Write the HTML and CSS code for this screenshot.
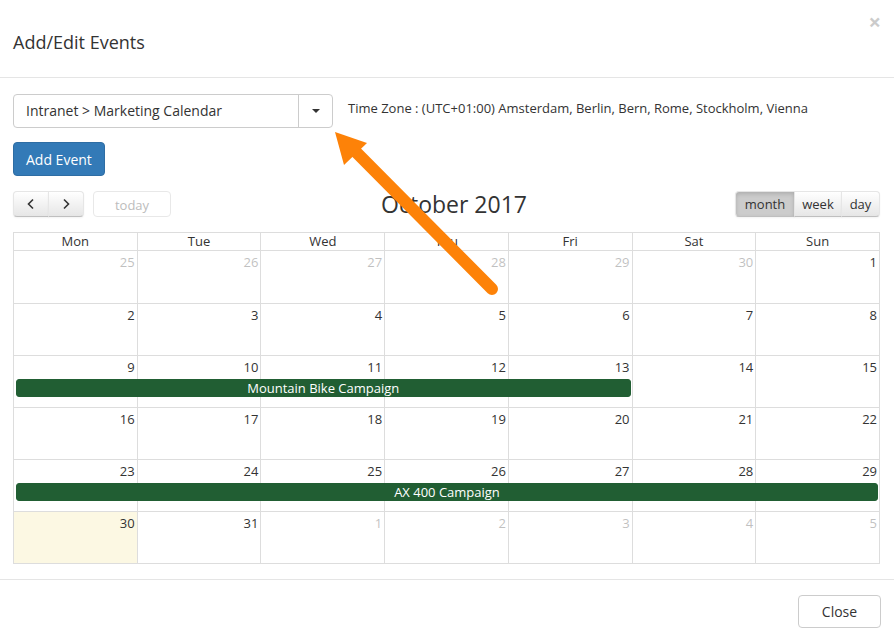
FILE: index.html
```html
<!DOCTYPE html>
<html>
<head>
<meta charset="utf-8">
<link rel="stylesheet" href="styles.css">
</head>
<body>
<div class="modal">
  <div class="modal-header">
    <h4 class="modal-title">Add/Edit Events</h4>
    <span class="close">&times;</span>
  </div>
  <div class="modal-body">
    <div class="picker-row">
      <div class="select">
        <span class="select-text">Intranet &gt; Marketing Calendar</span>
        <span class="select-btn"><span class="caret"></span></span>
      </div>
      <span class="tz">Time Zone : (UTC+01:00) Amsterdam, Berlin, Bern, Rome, Stockholm, Vienna</span>
    </div>
    <button class="btn-primary">Add Event</button>

    <div class="toolbar">
      <div class="tb-left">
        <div class="btn-group">
          <button class="fc-btn nav">
            <svg width="10" height="12" viewBox="0 0 10 12"><path d="M7 1.5 L2.5 6 L7 10.5" fill="none" stroke="#333" stroke-width="1.6"/></svg>
          </button>
          <button class="fc-btn nav">
            <svg width="10" height="12" viewBox="0 0 10 12"><path d="M3 1.5 L7.5 6 L3 10.5" fill="none" stroke="#333" stroke-width="1.6"/></svg>
          </button>
        </div>
        <button class="fc-btn today" disabled>today</button>
      </div>
      <h2 class="fc-title">October 2017</h2>
      <div class="btn-group">
        <button class="fc-btn view v-month active">month</button>
        <button class="fc-btn view v-week">week</button>
        <button class="fc-btn view v-day">day</button>
      </div>
    </div>

    <div class="cal">
      <div class="cal-head">
        <div class="hcell">Mon</div><div class="hcell">Tue</div><div class="hcell">Wed</div><div class="hcell">Thu</div><div class="hcell">Fri</div><div class="hcell">Sat</div><div class="hcell">Sun</div>
      </div>
      <div class="week first">
        <div class="day other"><span>25</span></div><div class="day other"><span>26</span></div><div class="day other"><span>27</span></div><div class="day other"><span>28</span></div><div class="day other"><span>29</span></div><div class="day other"><span>30</span></div><div class="day"><span>1</span></div>
      </div>
      <div class="week">
        <div class="day"><span>2</span></div><div class="day"><span>3</span></div><div class="day"><span>4</span></div><div class="day"><span>5</span></div><div class="day"><span>6</span></div><div class="day"><span>7</span></div><div class="day"><span>8</span></div>
      </div>
      <div class="week">
        <div class="day"><span>9</span></div><div class="day"><span>10</span></div><div class="day"><span>11</span></div><div class="day"><span>12</span></div><div class="day"><span>13</span></div><div class="day"><span>14</span></div><div class="day"><span>15</span></div>
        <div class="event span5">Mountain Bike Campaign</div>
      </div>
      <div class="week">
        <div class="day"><span>16</span></div><div class="day"><span>17</span></div><div class="day"><span>18</span></div><div class="day"><span>19</span></div><div class="day"><span>20</span></div><div class="day"><span>21</span></div><div class="day"><span>22</span></div>
      </div>
      <div class="week">
        <div class="day"><span>23</span></div><div class="day"><span>24</span></div><div class="day"><span>25</span></div><div class="day"><span>26</span></div><div class="day"><span>27</span></div><div class="day"><span>28</span></div><div class="day"><span>29</span></div>
        <div class="event span7">AX 400 Campaign</div>
      </div>
      <div class="week">
        <div class="day today-cell"><span>30</span></div><div class="day"><span>31</span></div><div class="day other"><span>1</span></div><div class="day other"><span>2</span></div><div class="day other"><span>3</span></div><div class="day other"><span>4</span></div><div class="day other"><span>5</span></div>
      </div>
    </div>
  </div>
  <div class="modal-footer">
    <button class="btn-default">Close</button>
  </div>

  <svg class="arrow" width="894" height="640" viewBox="0 0 894 640">
    <line x1="492" y1="289" x2="352" y2="148" stroke="#fd8208" stroke-width="12" stroke-linecap="round"/>
    <polygon points="335,132 367,143 344,165" fill="#fd8208"/>
  </svg>
</div>
</body>
</html>
```

FILE: styles.css
```css
* { box-sizing: border-box; }
html, body { margin: 0; padding: 0; }
body {
  font-family: "Open Sans", "Liberation Sans", sans-serif;
  color: #333;
  background: #fff;
  width: 894px;
  height: 640px;
  overflow: hidden;
}
.modal { position: relative; width: 894px; height: 640px; }

.modal-header {
  position: relative;
  padding: 29px 13px 22px;
  border-bottom: 1px solid #e5e5e5;
}
.modal-title {
  margin: 0;
  font-size: 18px;
  font-weight: 400;
  line-height: 26px;
  color: #333;
}
.close {
  position: absolute;
  top: 6px;
  right: 13px;
  font-size: 22px;
  font-weight: 700;
  color: #000;
  opacity: 0.2;
  line-height: 30px;
}

.modal-body { padding: 16px 14px 15px 13px; }

.picker-row { display: flex; align-items: center; }
.select {
  display: flex;
  width: 320px;
  height: 34px;
  border: 1px solid #ccc;
  border-radius: 4px;
  background: #fff;
}
.select-text {
  flex: 1;
  padding: 0 12px;
  font-size: 14px;
  line-height: 32px;
  color: #333;
}
.select-btn {
  width: 34px;
  border-left: 1px solid #ccc;
  display: flex;
  align-items: center;
  justify-content: center;
}
.caret {
  width: 0; height: 0;
  border-left: 4px solid transparent;
  border-right: 4px solid transparent;
  border-top: 4px solid #333;
}
.tz { margin-left: 15px; font-size: 13px; color: #333; margin-top: -6px; }

.btn-primary {
  display: block;
  margin-top: 14px;
  height: 34px;
  padding: 0 12px;
  font-family: inherit;
  font-size: 14px;
  color: #fff;
  background: #337ab7;
  border: 1px solid #2e6da4;
  border-radius: 4px;
}

.toolbar {
  display: flex;
  justify-content: space-between;
  align-items: center;
  margin-top: 15px;
  height: 26px;
}
.tb-left { display: flex; align-items: center; }
.btn-group { display: flex; }
.fc-btn {
  height: 26px;
  font-family: inherit;
  font-size: 13px;
  color: #333;
  padding: 0;
  background-color: #f5f5f5;
  background-image: linear-gradient(to bottom, #fff, #e6e6e6);
  border: 1px solid;
  border-color: #e6e6e6 #e6e6e6 #bfbfbf;
  box-shadow: inset 0 1px 0 rgba(255,255,255,.2), 0 1px 2px rgba(0,0,0,.05);
  margin: 0;
  display: flex;
  align-items: center;
  justify-content: center;
}
.btn-group .fc-btn + .fc-btn { margin-left: -1px; }
.btn-group .fc-btn:first-child { border-radius: 4px 0 0 4px; }
.btn-group .fc-btn:last-child { border-radius: 0 4px 4px 0; }
.fc-btn.nav { width: 36px; }
.fc-btn.today {
  margin-left: 9px;
  width: 78px;
  border-radius: 4px;
  opacity: .65;
  box-shadow: none;
  background-image: none;
  background-color: #fff;
  border-color: #ddd;
  color: #999;
  padding-top: 2px;
}
.v-month { width: 60px; }
.v-week { width: 48px; }
.v-day { width: 39px; }
.fc-btn.active {
  background-image: none;
  background-color: #ccc;
  box-shadow: inset 0 2px 4px rgba(0,0,0,.15), 0 1px 2px rgba(0,0,0,.05);
}
.fc-title {
  margin: 0;
  font-size: 23px;
  font-weight: 400;
  line-height: 26px;
  color: #333;
  position: relative;
  left: 1px;
}

.cal {
  margin-top: 15px;
  border-top: 1px solid #ddd;
  border-left: 1px solid #ddd;
}
.cal-head, .week {
  display: grid;
  grid-template-columns: repeat(7, 1fr);
}
.hcell {
  text-align: center;
  font-size: 13px;
  line-height: 17px;
  border-right: 1px solid #ddd;
  border-bottom: 1px solid #ddd;
}
.day {
  grid-row: 1;
  height: 52px;
  border-right: 1px solid #ddd;
  border-bottom: 1px solid #ddd;
  text-align: right;
  padding: 2px 2px 0 0;
  font-size: 13px;
  line-height: 18px;
}
.day:nth-child(1) { grid-column: 1; }
.day:nth-child(2) { grid-column: 2; }
.day:nth-child(3) { grid-column: 3; }
.day:nth-child(4) { grid-column: 4; }
.day:nth-child(5) { grid-column: 5; }
.day:nth-child(6) { grid-column: 6; }
.day:nth-child(7) { grid-column: 7; }
.week.first .day { height: 53px; }
.day.other span { opacity: .3; }
.today-cell { background: #fcf8e3; }
.event {
  grid-row: 1;
  align-self: start;
  margin: 23px 2px 0 2px;
  height: 18px;
  background: #215e33;
  border: 1px solid #215e33;
  border-radius: 3px;
  color: #fff;
  font-size: 13px;
  line-height: 16px;
  text-align: center;
}
.span5 { grid-column: 1 / 6; }
.span7 { grid-column: 1 / 8; }

.modal-footer {
  border-top: 1px solid #e5e5e5;
  padding: 15px 13px;
  display: flex;
  justify-content: flex-end;
}
.btn-default {
  height: 33px;
  width: 83px;
  padding: 0;
  font-family: inherit;
  font-size: 14px;
  color: #333;
  background: #fff;
  border: 1px solid #ccc;
  border-radius: 4px;
}

.arrow { position: absolute; left: 0; top: 0; pointer-events: none; }
```
